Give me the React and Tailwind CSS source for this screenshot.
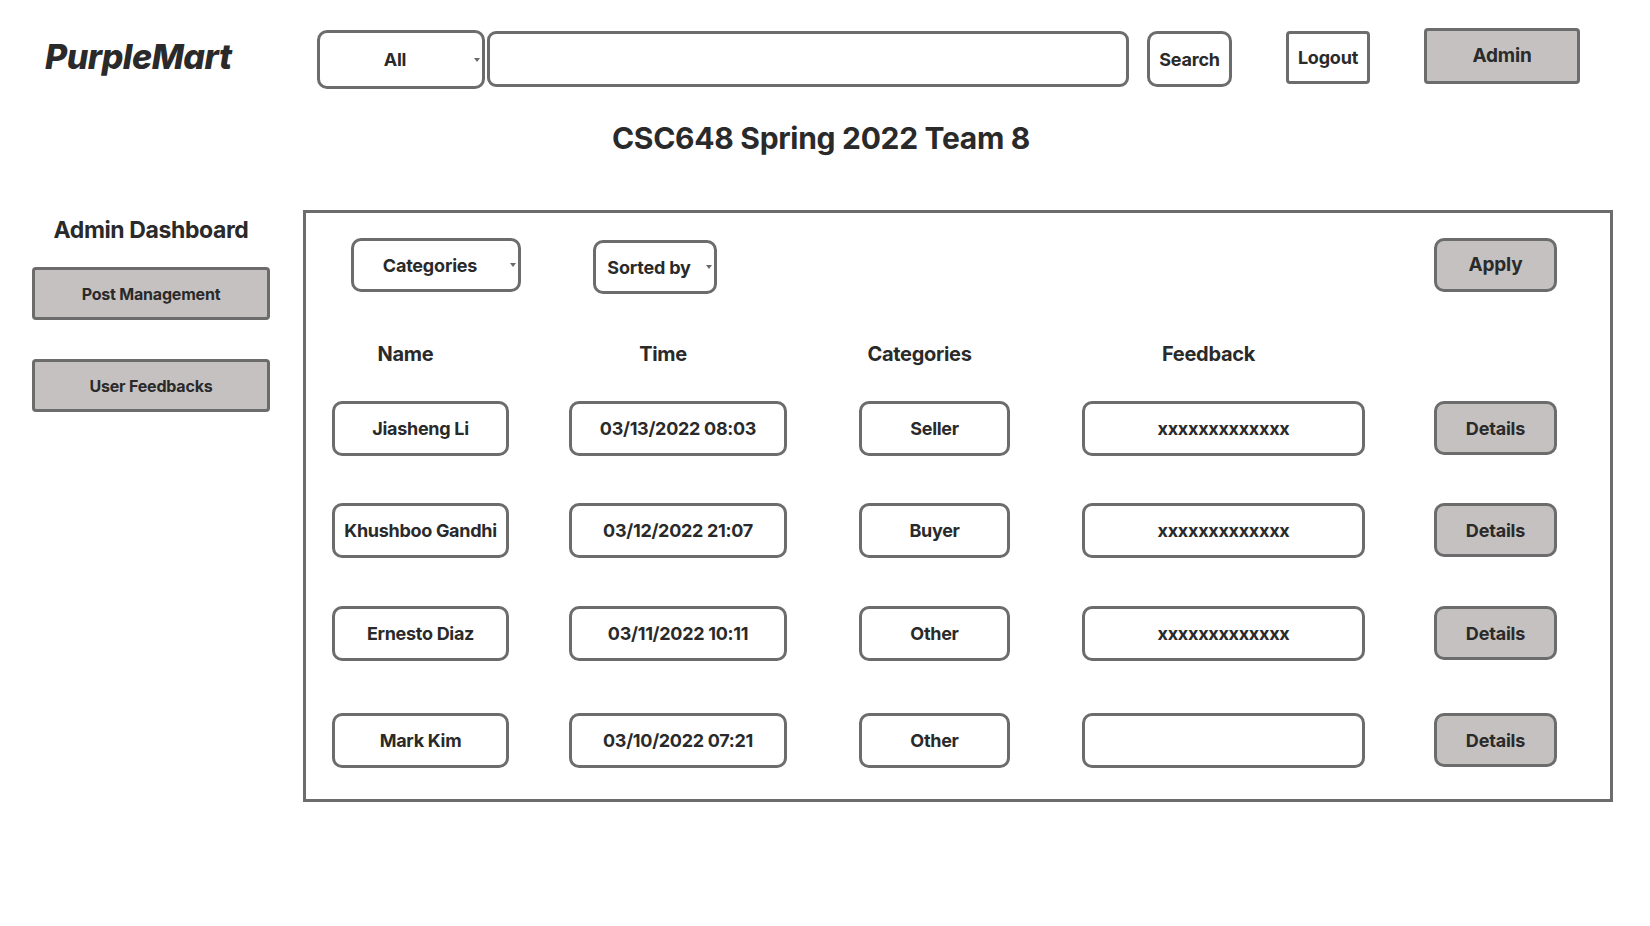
import React from 'react';

const rows = [
  { name: 'Jiasheng Li', time: '03/13/2022 08:03', category: 'Seller', feedback: 'xxxxxxxxxxxxx' },
  { name: 'Khushboo Gandhi', time: '03/12/2022 21:07', category: 'Buyer', feedback: 'xxxxxxxxxxxxx' },
  { name: 'Ernesto Diaz', time: '03/11/2022 10:11', category: 'Other', feedback: 'xxxxxxxxxxxxx' },
  { name: 'Mark Kim', time: '03/10/2022 07:21', category: 'Other', feedback: '' },
];

const rowGaps = ['mt-[35px]', 'mt-[47px]', 'mt-[48px]', 'mt-[52px]'];

const Caret = () => (
  <div className="w-[12px] flex justify-end pr-[2px]">
    <svg width="6" height="4" viewBox="0 0 6 4">
      <polygon points="0,0 6,0 3,4" fill="#6a6a6a" />
    </svg>
  </div>
);

const Dropdown = ({ label, className }) => (
  <div className={`flex items-center border-[3px] border-[#6c6c6c] rounded-[10px] bg-white ${className}`}>
    <span className="flex-1 text-center font-bold tracking-[-0.2px] text-[#2a2a2a]">{label}</span>
    <Caret />
  </div>
);

const Cell = ({ children, className }) => (
  <div className={`h-[55px] flex items-center justify-center border-[3px] border-[#6c6c6c] rounded-[10px] bg-white text-[18px] font-bold tracking-[-0.3px] text-[#2a2a2a] ${className}`}>
    {children}
  </div>
);

const GrayButton = ({ children, className }) => (
  <button className={`flex items-center justify-center border-[3px] border-[#6c6c6c] bg-[#c5c1c0] font-bold tracking-[-0.2px] text-[#2a2a2a] ${className}`}>
    {children}
  </button>
);

const App = () => {
  return (
    <div className="w-[1650px] h-[926px] bg-white font-['Inter','Liberation_Sans',sans-serif] text-[#2a2a2a]">
      {/* top bar */}
      <div className="flex items-start pt-[28px]">
        <div className="ml-[45px] w-[272px] mt-[9px] h-[40px] leading-[40px] text-[34px] font-extrabold italic tracking-[-0.5px]">
          PurpleMart
        </div>
        <Dropdown label="All" className="mt-[2px] w-[168px] h-[59px] text-[18px]" />
        <div className="ml-[2px] mt-[3px] w-[642px] h-[56px] border-[3px] border-[#6c6c6c] rounded-[9px] bg-white" />
        <button className="ml-[18px] mt-[3px] w-[85px] h-[56px] border-[3px] border-[#6c6c6c] rounded-[10px] bg-white text-[18px] font-bold tracking-[-0.2px]">
          Search
        </button>
        <button className="ml-[54px] mt-[3px] w-[84px] h-[53px] border-[3px] border-[#6c6c6c] rounded-[4px] bg-white text-[18px] font-bold tracking-[-0.2px]">
          Logout
        </button>
        <GrayButton className="ml-[54px] w-[156px] h-[56px] rounded-[4px] text-[19px]">Admin</GrayButton>
      </div>

      <h1 className="mt-[31px] h-[36px] leading-[36px] text-center text-[30px] font-bold tracking-[-0.3px] pr-[8px]">
        CSC648 Spring 2022 Team 8
      </h1>

      <div className="flex items-start mt-[54px]">
        {/* sidebar */}
        <div className="ml-[32px] w-[238px] pt-[6px] flex flex-col">
          <div className="h-[28px] leading-[28px] text-center text-[23px] font-bold tracking-[-0.4px]">Admin Dashboard</div>
          <GrayButton className="mt-[23px] h-[53px] rounded-[4px] text-[16px]">Post Management</GrayButton>
          <GrayButton className="mt-[39px] h-[53px] rounded-[4px] text-[16px]">User Feedbacks</GrayButton>
        </div>

        {/* panel */}
        <div className="ml-[33px] w-[1310px] h-[592px] border-[3px] border-[#6c6c6c]">
          <div className="flex items-start pt-[25px]">
            <Dropdown label="Categories" className="ml-[45px] w-[170px] h-[54px] text-[18px]" />
            <Dropdown label="Sorted by" className="ml-[72px] mt-[2px] w-[124px] h-[54px] text-[18px]" />
            <GrayButton className="ml-auto mr-[53px] w-[123px] h-[54px] rounded-[10px] text-[19px]">Apply</GrayButton>
          </div>

          <div className="flex mt-[48px] h-[24px] leading-[24px] text-[20px] font-bold tracking-[-0.3px]">
            <div className="ml-[26px] w-[177px] text-center pr-[30px]">Name</div>
            <div className="ml-[60px] w-[218px] text-center pr-[30px]">Time</div>
            <div className="ml-[72px] w-[151px] text-center pr-[30px]">Categories</div>
            <div className="ml-[72px] w-[283px] text-center pr-[30px]">Feedback</div>
          </div>

          {rows.map((r, i) => (
            <div key={r.name} className={`flex items-start ${rowGaps[i]}`}>
              <Cell className="ml-[26px] w-[177px]">{r.name}</Cell>
              <Cell className="ml-[60px] w-[218px]">{r.time}</Cell>
              <Cell className="ml-[72px] w-[151px]">{r.category}</Cell>
              <Cell className="ml-[72px] w-[283px] text-[17px]">{r.feedback}</Cell>
              <GrayButton className="ml-[69px] w-[123px] h-[54px] rounded-[10px] text-[18px]">Details</GrayButton>
            </div>
          ))}
        </div>
      </div>
    </div>
  );
};

export default App;
